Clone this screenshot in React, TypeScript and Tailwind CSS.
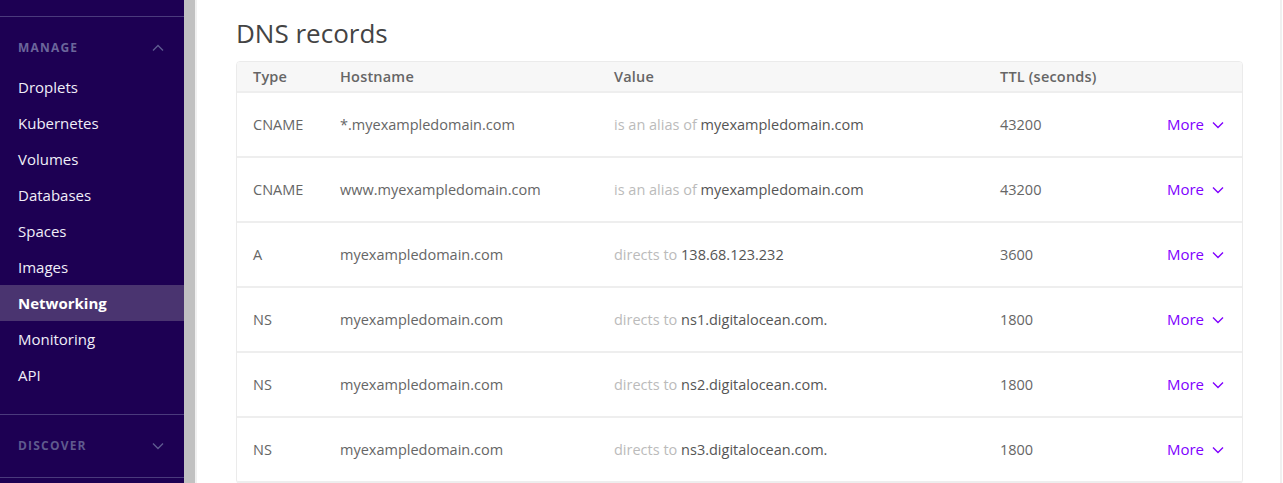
import React from "react";

const nav = ["Droplets", "Kubernetes", "Volumes", "Databases", "Spaces", "Images", "Networking", "Monitoring", "API"];

const rows = [
  { type: "CNAME", host: "*.myexampledomain.com", pre: "is an alias of", val: "myexampledomain.com", ttl: "43200" },
  { type: "CNAME", host: "www.myexampledomain.com", pre: "is an alias of", val: "myexampledomain.com", ttl: "43200" },
  { type: "A", host: "myexampledomain.com", pre: "directs to", val: "138.68.123.232", ttl: "3600" },
  { type: "NS", host: "myexampledomain.com", pre: "directs to", val: "ns1.digitalocean.com.", ttl: "1800" },
  { type: "NS", host: "myexampledomain.com", pre: "directs to", val: "ns2.digitalocean.com.", ttl: "1800" },
  { type: "NS", host: "myexampledomain.com", pre: "directs to", val: "ns3.digitalocean.com.", ttl: "1800" },
];

function Chevron({ up, className }: { up?: boolean; className?: string }) {
  return (
    <svg width="12" height="8" viewBox="0 0 12 8" className={className} fill="none" stroke="currentColor" strokeWidth="1.4">
      {up ? <path d="M1 6.5 L6 1.5 L11 6.5" /> : <path d="M1 1.5 L6 6.5 L11 1.5" />}
    </svg>
  );
}

export default function App() {
  return (
    <div className="flex h-[483px] w-[1283px] overflow-hidden bg-white" style={{ fontFamily: "'Open Sans', 'Liberation Sans', sans-serif" }}>
      <aside className="w-[184px] shrink-0 bg-[#1d0053] flex flex-col">
        <div className="h-[17px] border-b border-[#4a3a7c]" />
        <div className="flex items-center justify-between pl-[18px] pr-[20px] pt-[22px] pb-[12px]">
          <span className="text-[12px] font-bold tracking-[1.2px] text-[#6b669b]">MANAGE</span>
          <Chevron up className="text-[#5e5a90]" />
        </div>
        <div className="flex flex-col">
          {nav.map((n) => (
            <div
              key={n}
              className={`h-[36px] flex items-center pl-[18px] text-[15px] ${n === "Networking" ? "bg-[#4a3470] font-bold text-white" : "text-[#f0eef8]"}`}
            >
              {n}
            </div>
          ))}
        </div>
        <div className="mt-[21px] border-t border-[#4a3a7c]" />
        <div className="h-[62px] flex items-center justify-between pl-[18px] pr-[20px]">
          <span className="text-[12px] font-bold tracking-[1.2px] text-[#5f5a8e]">DISCOVER</span>
          <Chevron className="text-[#5e5a90]" />
        </div>
        <div className="border-t border-[#4a3a7c]" />
      </aside>
      <div className="w-[11px] shrink-0 bg-[#c1c1c1]" />
      <div className="w-[2px] shrink-0 bg-[#f1f1f1]" />
      <main className="flex-1 pl-[39px] pr-[37px]">
        <h1 className="pt-[16px] h-[61px] text-[26px] leading-[34px] text-[#444444]">DNS records</h1>
        <div className="border border-[#ebebeb] rounded-[4px] overflow-hidden">
          <div className="h-[31px] bg-[#f7f7f7] border-b-2 border-[#eeeeee] flex items-center text-[14.5px] font-semibold text-[#666666] tracking-[0.2px]">
            <div className="w-[103px] pl-[16px]">Type</div>
            <div className="w-[274px]">Hostname</div>
            <div className="w-[386px]">Value</div>
            <div className="flex-1">TTL (seconds)</div>
          </div>
          {rows.map((r, i) => (
            <div key={i} className="h-[65px] border-b-2 border-[#eeeeee] flex items-center text-[14.5px] text-[#666666]">
              <div className="w-[103px] pl-[16px]">{r.type}</div>
              <div className="w-[274px]">{r.host}</div>
              <div className="w-[386px]">
                <span className="text-[#bbbbbb]">{r.pre}</span> <span className="text-[#555555]">{r.val}</span>
              </div>
              <div className="flex-1">{r.ttl}</div>
              <div className="pr-[18px] flex items-center gap-[8px] text-[#8000ff] text-[15px]">
                More <Chevron className="text-[#8000ff]" />
              </div>
            </div>
          ))}
        </div>
      </main>
      <div className="w-[3px] shrink-0 bg-white border-l-2 border-[#f0f0f0]" />
    </div>
  );
}
